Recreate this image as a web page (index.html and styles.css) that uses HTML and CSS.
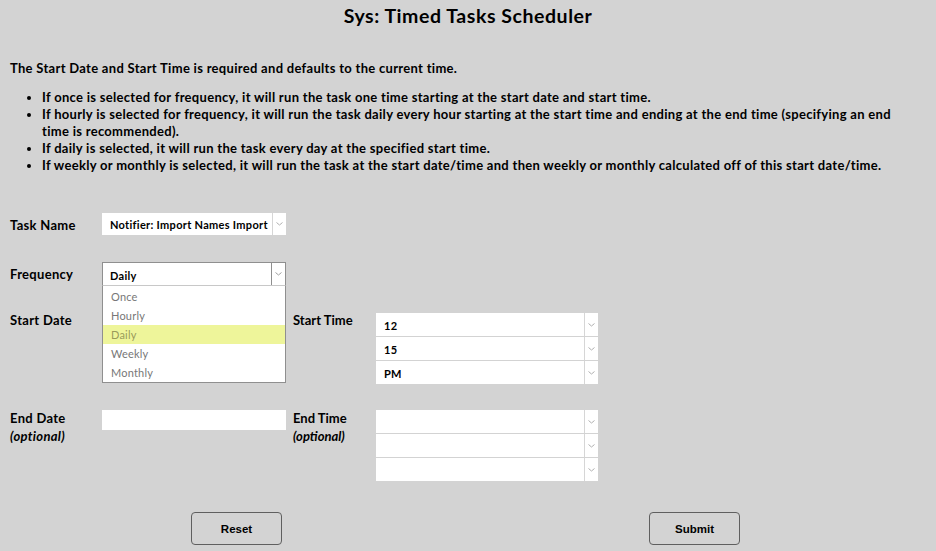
FILE: index.html
```html
<!DOCTYPE html>
<html>
<head>
<meta charset="utf-8">
<title>Sys: Timed Tasks Scheduler</title>
<link rel="stylesheet" href="styles.css">
</head>
<body>
<div class="page">
  <h1 class="title">Sys: Timed Tasks Scheduler</h1>
  <p class="intro">The Start Date and Start Time is required and defaults to the current time.</p>
  <ul class="notes">
    <li>If once is selected for frequency, it will run the task one time starting at the start date and start time.</li>
    <li>If hourly is selected for frequency, it will run the task daily every hour starting at the start time and ending at the end time (specifying an end time is recommended).</li>
    <li>If daily is selected, it will run the task every day at the specified start time.</li>
    <li>If weekly or monthly is selected, it will run the task at the start date/time and then weekly or monthly calculated off of this start date/time.</li>
  </ul>

  <div class="form">
    <div class="row row-task">
      <div class="label">Task Name</div>
      <div class="sel sel-task">
        <span class="sel-text">Notifier: Import Names Import</span>
        <span class="sel-arrow"><svg width="7" height="4" viewBox="0 0 7 4"><path d="M0.5 0.5 L3.5 3 L6.5 0.5" fill="none" stroke="#b0b0b0" stroke-width="1"/></svg></span>
      </div>
    </div>

    <div class="row row-freq">
      <div class="label">Frequency</div>
      <div class="freq-wrap">
        <div class="sel sel-freq">
          <span class="sel-text">Daily</span>
          <span class="sel-arrow"><svg width="7" height="4" viewBox="0 0 7 4"><path d="M0.5 0.5 L3.5 3 L6.5 0.5" fill="none" stroke="#a0a0a0" stroke-width="1"/></svg></span>
        </div>
        <div class="dropdown">
          <div class="opt">Once</div>
          <div class="opt">Hourly</div>
          <div class="opt opt-active">Daily</div>
          <div class="opt">Weekly</div>
          <div class="opt">Monthly</div>
        </div>
      </div>
    </div>

    <div class="row row-start">
      <div class="label">Start Date</div>
      <div class="text-input start-date"></div>
      <div class="label label2">Start Time</div>
      <div class="stack">
        <div class="sel sel-time"><span class="sel-text">12</span><span class="sel-arrow"><svg width="7" height="4" viewBox="0 0 7 4"><path d="M0.5 0.5 L3.5 3 L6.5 0.5" fill="none" stroke="#b0b0b0" stroke-width="1"/></svg></span></div>
        <div class="sel sel-time"><span class="sel-text">15</span><span class="sel-arrow"><svg width="7" height="4" viewBox="0 0 7 4"><path d="M0.5 0.5 L3.5 3 L6.5 0.5" fill="none" stroke="#b0b0b0" stroke-width="1"/></svg></span></div>
        <div class="sel sel-time"><span class="sel-text">PM</span><span class="sel-arrow"><svg width="7" height="4" viewBox="0 0 7 4"><path d="M0.5 0.5 L3.5 3 L6.5 0.5" fill="none" stroke="#b0b0b0" stroke-width="1"/></svg></span></div>
      </div>
    </div>

    <div class="row row-end">
      <div class="label">End Date<br><em>(optional)</em></div>
      <div class="text-input end-date"></div>
      <div class="label label2">End Time<br><em>(optional)</em></div>
      <div class="stack">
        <div class="sel sel-time"><span class="sel-text"></span><span class="sel-arrow"><svg width="7" height="4" viewBox="0 0 7 4"><path d="M0.5 0.5 L3.5 3 L6.5 0.5" fill="none" stroke="#b0b0b0" stroke-width="1"/></svg></span></div>
        <div class="sel sel-time"><span class="sel-text"></span><span class="sel-arrow"><svg width="7" height="4" viewBox="0 0 7 4"><path d="M0.5 0.5 L3.5 3 L6.5 0.5" fill="none" stroke="#b0b0b0" stroke-width="1"/></svg></span></div>
        <div class="sel sel-time"><span class="sel-text"></span><span class="sel-arrow"><svg width="7" height="4" viewBox="0 0 7 4"><path d="M0.5 0.5 L3.5 3 L6.5 0.5" fill="none" stroke="#b0b0b0" stroke-width="1"/></svg></span></div>
      </div>
    </div>

    <div class="buttons">
      <button class="btn btn-reset" type="button">Reset</button>
      <button class="btn btn-submit" type="button">Submit</button>
    </div>
  </div>
</div>
</body>
</html>
```

FILE: styles.css
```css
html, body {
  margin: 0;
  padding: 0;
  background: #d3d3d3;
}

body {
  font-family: "Lato", "DejaVu Sans", sans-serif;
  color: #000;
  width: 936px;
  height: 551px;
  overflow: hidden;
}

.page {
  padding: 0 10px;
}

.title {
  margin: 0;
  padding-top: 5px;
  height: 24px;
  text-align: center;
  font-size: 19.5px;
  font-weight: 700;
  line-height: 22px;
  letter-spacing: 0.55px;
}

.intro {
  margin: 31px 0 0 0;
  font-size: 13px;
  font-weight: 700;
  line-height: 17px;
  letter-spacing: 0.3px;
}

.notes {
  margin: 12px 0 0 0;
  padding: 0 0 0 32px;
  width: 866px;
  font-size: 13px;
  font-weight: 700;
  line-height: 17px;
  letter-spacing: 0.3px;
}

.form {
  margin-top: 39px;
  font-size: 13px;
  font-weight: 700;
}

.row {
  display: grid;
  grid-template-columns: 92px 184px 7px 83px 222px;
  align-items: start;
}

.row-task {
  height: 49px;
}

.row-freq {
  height: 51px;
  position: relative;
  z-index: 2;
}

.row-start {
  height: 97px;
}

.row-end {
  height: 102px;
}

.label {
  grid-column: 1;
  line-height: 18px;
  letter-spacing: 0.3px;
}

.label em {
  font-style: italic;
}

.label2 {
  grid-column: 4;
  letter-spacing: 0;
}

.row-task .label,
.row-freq .label {
  padding-top: 3px;
}

.row-start .label {
  margin-top: -2px;
}

.row-end .label {
  margin-top: -1px;
}

.sel {
  display: flex;
  background: #fff;
  box-sizing: border-box;
  font-size: 11px;
  font-weight: 700;
}

.sel-text {
  flex: 1;
  padding-left: 8px;
  white-space: nowrap;
  overflow: hidden;
  letter-spacing: 0.3px;
}

.sel-arrow {
  width: 13px;
  border-left: 1px solid #d6d6d6;
  display: flex;
  align-items: center;
  justify-content: center;
}

.sel-task {
  grid-column: 2;
  height: 22px;
  line-height: 24px;
  width: 184px;
}

.freq-wrap {
  grid-column: 2;
  position: relative;
  width: 184px;
}

.sel-freq {
  height: 24px;
  line-height: 26px;
  border: 1px solid #8f8f8f;
  border-bottom-color: #c8c8c8;
}

.sel-freq .sel-text {
  padding-left: 7px;
}

.sel-freq .sel-arrow {
  border-left: 1px solid #8f8f8f;
}

.dropdown {
  position: absolute;
  left: 0;
  top: 24px;
  width: 184px;
  box-sizing: border-box;
  background: #fff;
  border: 1px solid #8f8f8f;
  border-top: none;
  padding-top: 1px;
}

.opt {
  height: 19px;
  line-height: 19px;
  padding-left: 8px;
  font-size: 11px;
  font-weight: 400;
  color: #777;
  letter-spacing: 0.2px;
}

.opt-active {
  background: #eef59a;
  color: #999b5a;
}

.text-input {
  grid-column: 2;
  background: #fff;
  width: 184px;
  height: 20px;
}

.stack {
  grid-column: 5;
  display: flex;
  flex-direction: column;
  gap: 1px;
}

.sel-time {
  height: 23px;
  line-height: 25px;
  width: 222px;
}

.buttons {
  display: flex;
  padding-left: 181px;
  gap: 367px;
}

.btn {
  width: 91px;
  height: 33px;
  box-sizing: border-box;
  background: #d3d3d3;
  border: 1px solid #5f5f5f;
  border-radius: 4px;
  font-family: "Liberation Sans", Arial, sans-serif;
  font-size: 11.5px;
  font-weight: 700;
  color: #000;
  padding: 0;
}
```
